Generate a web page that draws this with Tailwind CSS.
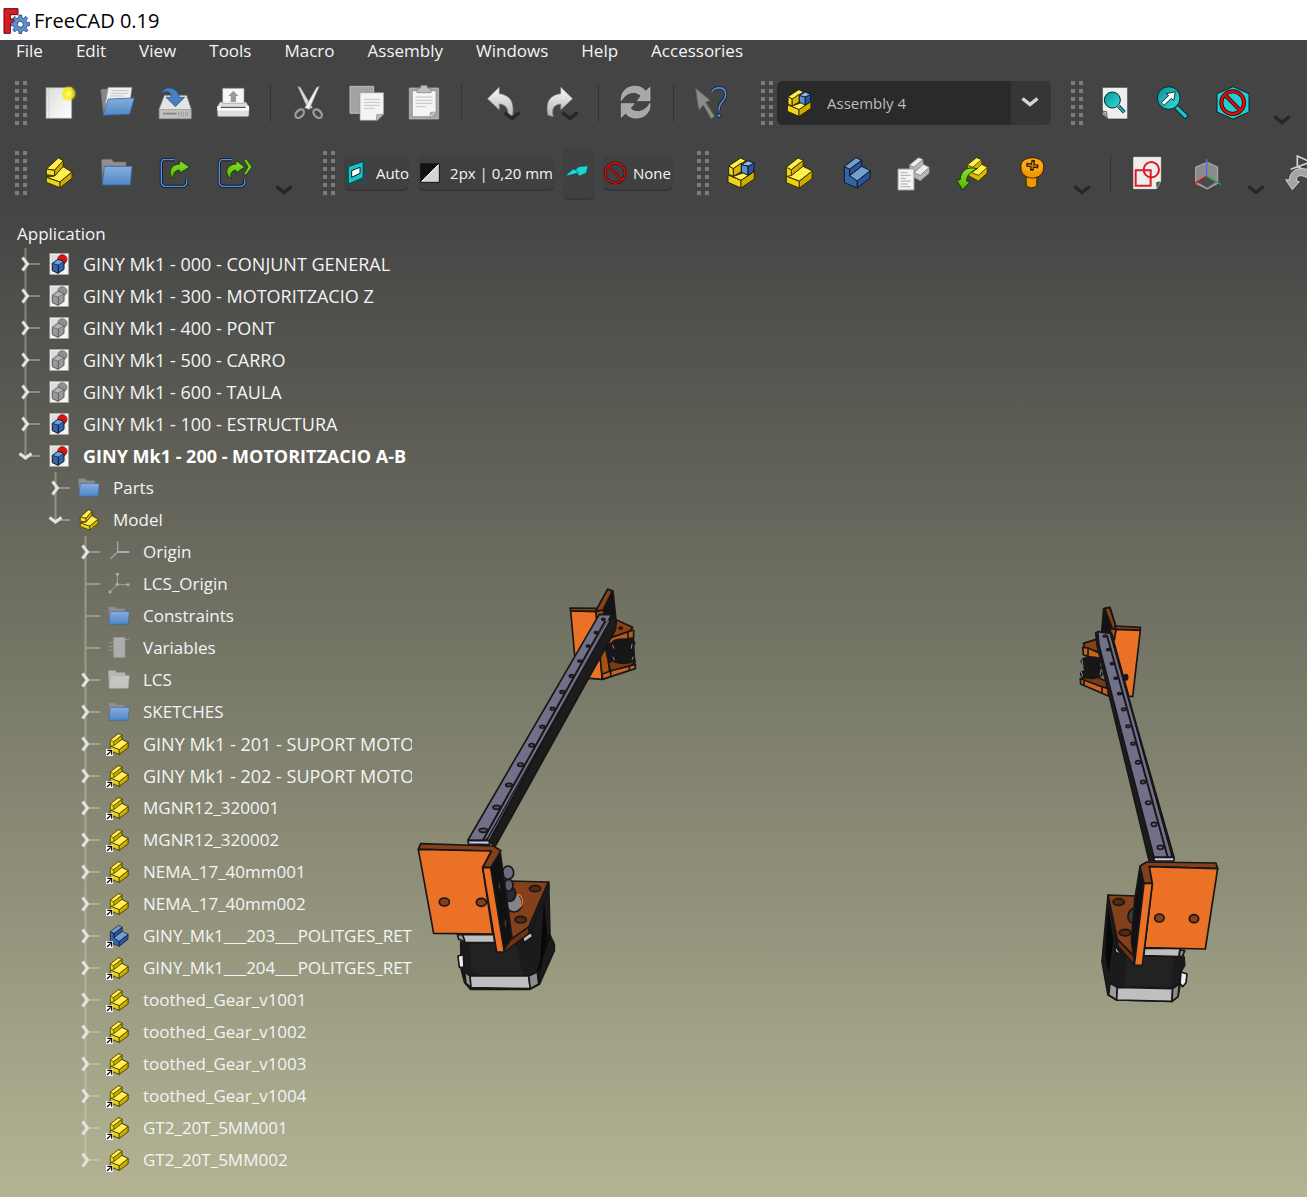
<!DOCTYPE html>
<html lang="en">
<head>
<meta charset="utf-8">
<meta name="viewport" content="width=device-width, initial-scale=1">
<title>FreeCAD 0.19</title>
<script src="https://cdn.jsdelivr.net/npm/@tailwindcss/browser@4"></script>
</head>
<body class="flex min-h-screen flex-col overflow-x-hidden bg-[#444444] font-['Open_Sans','Noto_Sans',sans-serif] text-[17px] text-gray-100">

<!-- Shared icon definitions -->
<svg class="absolute size-0" aria-hidden="true">
  <defs>
    <linearGradient id="gYel" x1="0" y1="0" x2="1" y2="1"><stop offset="0" stop-color="#fce94f"/><stop offset="1" stop-color="#d9b800"/></linearGradient>
    <linearGradient id="gBlue" x1="0" y1="0" x2="0" y2="1"><stop offset="0" stop-color="#86aedc"/><stop offset="1" stop-color="#5088c8"/></linearGradient>
    <linearGradient id="gPaper" x1="0" y1="0" x2="1" y2="1"><stop offset="0" stop-color="#dcdcda"/><stop offset="1" stop-color="#ffffff"/></linearGradient>
    <linearGradient id="gGrey" x1="0" y1="0" x2="0" y2="1"><stop offset="0" stop-color="#fafafa"/><stop offset="1" stop-color="#b4b4b4"/></linearGradient>
    <linearGradient id="gGreen" x1="0" y1="0" x2="0" y2="1"><stop offset="0" stop-color="#8ae234"/><stop offset="1" stop-color="#4fb000"/></linearGradient>
    <linearGradient id="gTeal" x1="0" y1="0" x2="1" y2="1"><stop offset="0" stop-color="#0a8f94"/><stop offset="1" stop-color="#34e0e2"/></linearGradient>
    <radialGradient id="gGlow"><stop offset="0" stop-color="#fffde0"/><stop offset=".25" stop-color="#fdf54c"/><stop offset=".65" stop-color="#f5e900" stop-opacity=".85"/><stop offset="1" stop-color="#f5e900" stop-opacity="0"/></radialGradient>
  </defs>

  <symbol id="part" viewBox="129 471 96 96">
    <g stroke="#3a3200" stroke-width="3" stroke-linejoin="round">
      <path d="M139 507 175 474 190 482 189 499 164 528 139 521Z" fill="#d9b800"/>
      <path d="M139 507 175 474 190 482 164 511Z" fill="#fff04f"/>
      <path d="M139 507 164 511 164 528 139 524Z" fill="#f5dc2a"/>
      <path d="M164 511 190 482 189 500 164 528Z" fill="#d2b100"/>
      <path d="M139 532 164 528 189 500 216 516 180 546Z" fill="#fff04f"/>
      <path d="M139 532 180 546 180 563 139 547Z" fill="#f0d41c"/>
      <path d="M180 546 216 516 216 535 180 563Z" fill="#cfae00"/>
    </g>
  </symbol>
  <symbol id="part2" viewBox="1029 351 96 96">
    <g stroke="#3a3200" stroke-width="3" stroke-linejoin="round">
      <path d="M1039 382 1074 354 1090 361 1089 378 1117 392 1116 416 1078 444 1039 428Z" fill="#f0d41c"/>
      <path d="M1039 382 1074 354 1090 361 1054 389Z" fill="#fff04f"/>
      <path d="M1054 389 1090 361 1089 379 1054 408Z" fill="#cfae00"/>
      <path d="M1039 409 1054 407 1089 379 1117 393 1078 423Z" fill="#fff04f"/>
      <path d="M1039 409 1078 424 1078 444 1039 428Z" fill="#ecd018"/>
      <path d="M1078 424 1117 393 1116 416 1078 444Z" fill="#cfae00"/>
    </g>
  </symbol>
  <symbol id="body" viewBox="1203 351 96 96">
    <g stroke="#0b1a30" stroke-width="3" stroke-linejoin="round">
      <path d="M1213 380 1248 353 1265 361 1229 388Z" fill="#729fcf"/>
      <path d="M1213 380 1229 388 1229 406 1252 422 1252 444 1213 428Z" fill="#3465a4"/>
      <path d="M1229 388 1265 361 1265 378 1229 407Z" fill="#2a5597"/>
      <path d="M1229 407 1265 379 1291 392 1252 423Z" fill="#729fcf"/>
      <path d="M1252 423 1291 392 1290 414 1252 444Z" fill="#2a5597"/>
    </g>
  </symbol>
  <symbol id="asm" viewBox="849 345 108 108">
    <g stroke="#2e2800" stroke-width="3" stroke-linejoin="round">
      <path d="M864 405 903 421 903 444 864 427Z" fill="#f0d41c"/>
      <path d="M903 421 943 394 943 417 903 444Z" fill="#cfae00"/>
      <path d="M878 410 916 396 943 394 903 421Z" fill="#fff04f"/>
      <path d="M866 378 902 354 918 362 880 386Z" fill="#fff04f"/>
      <path d="M866 378 880 386 880 409 866 403Z" fill="#f5dc2a"/>
      <path d="M880 386 904 369 904 395 880 409Z" fill="#d9b800"/>
      <path d="M904 374 924 362 943 370 924 379Z" fill="#8fb5e0" stroke="#0b1a30"/>
      <path d="M904 374 924 379 924 406 904 396Z" fill="#5b8fce" stroke="#0b1a30"/>
      <path d="M924 379 943 370 941 394 924 406Z" fill="#2a5597" stroke="#0b1a30"/>
    </g>
  </symbol>
  <symbol id="folder" viewBox="303 471 96 96">
    <path d="M304 482 307 478H335L341 486H378V500L384 552 312 555 308 550Z" fill="#8f8f8d" stroke="#6a6a68" stroke-width="2"/>
    <path d="M313 499H396L391 555H307Z" fill="url(#gBlue)" stroke="#3465a4" stroke-width="2.500"/>
  </symbol>
  <symbol id="folderGrey" viewBox="303 471 96 96">
    <path d="M304 482 307 478H335L341 486H378V500L384 552 312 555 308 550Z" fill="#b8b8b6" stroke="#9a9a98" stroke-width="2"/>
    <path d="M313 499H396L391 555H307Z" fill="#c4c4c2" stroke="#a5a5a3" stroke-width="2.500"/>
  </symbol>
  <symbol id="doc" viewBox="144 112 66 66">
    <path d="M149 113H206V177H149Z" fill="#f4f4f2" stroke="#8a8a88" stroke-width="1.500"/>
    <path d="M153 117H190L153 160Z" fill="#dcdcda"/>
    <circle cx="187" cy="131" r="14" fill="#e01010" stroke="#7a0000" stroke-width="2"/>
    <path d="M157 143 174 131 192 138 192 161 174 173 157 165Z" fill="#3465a4" stroke="#0b1a30" stroke-width="3" stroke-linejoin="round"/>
    <path d="M157 143 174 131 192 138 175 148Z" fill="#729fcf" stroke="#0b1a30" stroke-width="2"/>
    <path d="M175 148V173" stroke="#0b1a30" stroke-width="3"/>
  </symbol>
  <symbol id="docGrey" viewBox="144 112 66 66">
    <path d="M149 113H206V177H149Z" fill="#f4f4f2" stroke="#8a8a88" stroke-width="1.500"/>
    <path d="M153 117H190L153 160Z" fill="#dcdcda"/>
    <circle cx="187" cy="131" r="14" fill="#8e8e8e" stroke="#666" stroke-width="2"/>
    <path d="M157 143 174 131 192 138 192 161 174 173 157 165Z" fill="#999" stroke="#5a5a5a" stroke-width="3" stroke-linejoin="round"/>
    <path d="M157 143 174 131 192 138 175 148Z" fill="#b4b4b4" stroke="#5a5a5a" stroke-width="2"/>
    <path d="M175 148V173" stroke="#5a5a5a" stroke-width="3"/>
  </symbol>
  <symbol id="origin" viewBox="0 0 66 66">
    <path d="M29 0V32L7 54M29 33H64" fill="none" stroke="#a3a3a8" stroke-width="4"/>
    <path d="M29 33H64" stroke="#c4c4c8" stroke-width="3"/>
  </symbol>
  <symbol id="lcs" viewBox="0 0 66 66">
    <path d="M28 2V34L6 57M28 35H60" fill="none" stroke="#a3a3a8" stroke-width="3"/>
    <g fill="#a9a9b0"><circle cx="28" cy="3" r="5"/><circle cx="28" cy="34" r="5"/><circle cx="6" cy="57" r="5"/><circle cx="60" cy="35" r="5"/></g>
  </symbol>
  <symbol id="vars" viewBox="0 0 66 66">
    <path d="M17 1H51V61H17Z" fill="#adadad" stroke="#98989c" stroke-width="2"/>
    <path d="M51 8H64M2 17H16M2 28H16M2 39H16" stroke="#9a9aa0" stroke-width="3"/>
  </symbol>
  <symbol id="grip" viewBox="0 0 12 44">
    <g fill="#7c7c7c">
      <path d="M0 0H4V4H0ZM8 0H12V4H8ZM0 8H4V12H0ZM8 8H12V12H8ZM0 16H4V20H0ZM8 16H12V20H8ZM0 24H4V28H0ZM8 24H12V28H8ZM0 32H4V36H0ZM8 32H12V36H8ZM0 40H4V44H0ZM8 40H12V44H8Z"/>
    </g>
  </symbol>
  <symbol id="chev" viewBox="0 0 18 10"><path d="M1.500 1.500 9 7.500 16.500 1.500" fill="none" stroke="currentColor" stroke-width="3.500"/></symbol>
</svg>

<!-- Title bar -->
<header class="flex h-10 shrink-0 items-center gap-1 bg-white pl-[2px] pt-0.5 text-black">
  <svg class="h-7 w-7 shrink-0" viewBox="4 18 84 84" aria-hidden="true">
    <path d="M10 23H52V41H29V54H42V68H29V97H10Z" fill="#dc1c24" stroke="#5c0508" stroke-width="3"/>
    <g transform="translate(59 70)">
      <g fill="#5a8fd0" stroke="#17305a" stroke-width="2">
        <path d="M-5-20-4-28H4L5-20 10-18 16-24 22-18 17-12 19-6 28-5V4L20 5 17 11 23 18 17 23 11 18 5 20 4 28H-4L-5 20-11 17-17 23-23 17-18 11-20 5-28 4V-5L-20-6-17-12-23-18-17-24-11-18Z"/>
      </g>
      <circle r="9" fill="#fff" stroke="#17305a" stroke-width="2.500"/>
    </g>
  </svg>
  <h1 class="text-[20px] leading-8">FreeCAD 0.19</h1>
</header>

<!-- Menu bar -->
<nav class="flex h-[22px] shrink-0 items-center gap-[33px] pl-4 leading-[22px]" aria-label="Main menu">
  <a href="#file">File</a>
  <a href="#edit">Edit</a>
  <a href="#view">View</a>
  <a href="#tools">Tools</a>
  <a href="#macro">Macro</a>
  <a href="#assembly">Assembly</a>
  <a href="#windows">Windows</a>
  <a href="#help">Help</a>
  <a href="#accessories">Accessories</a>
</nav>

<!-- File, workbench and view toolbars -->
<div class="flex h-[82px] shrink-0 items-center overflow-hidden pl-[15px]" role="toolbar" aria-label="File">
  <svg class="mr-[3px] h-11 w-3 shrink-0" aria-hidden="true"><use href="#grip"/></svg>
  <button class="grid w-[58px] shrink-0 place-items-center" aria-label="New">
    <svg class="size-9" viewBox="123 255 108 108"><path d="M138 263H215V355H138Z" fill="url(#gPaper)" stroke="#9a9a98" stroke-width="2"/><path d="M147 264V354" stroke="#c8c8c6" stroke-width="2"/><circle cx="206" cy="281" r="24" fill="url(#gGlow)"/></svg>
  </button>
  <button class="grid w-[58px] shrink-0 place-items-center" aria-label="Open">
    <svg class="size-9" viewBox="297 255 108 108"><path d="M302 270 306 267H325V330L310 340Z" fill="#888" stroke="#666" stroke-width="2"/><path d="M324 262H396L391 300 312 340Z" fill="#f0f0ee" stroke="#888" stroke-width="2"/><path d="M335 272H386M333 280H384M330 288H370" stroke="#aaa" stroke-width="2"/><path d="M325 297 403 294 389 343 309 346Z" fill="url(#gBlue)" stroke="#3465a4" stroke-width="2.500"/></svg>
  </button>
  <button class="grid w-[58px] shrink-0 place-items-center" aria-label="Save">
    <svg class="size-9" viewBox="471 255 108 108"><path d="M493 286H560L574 328V356H477V328Z" fill="#e4e4e2" stroke="#777" stroke-width="2"/><path d="M478 329H573V356H478Z" fill="#c2c2c0" stroke="#888" stroke-width="2"/><path d="M489 341H530" stroke="#8a8a88" stroke-width="6"/><path d="M536 335V350M543 335V350M550 335V350M557 335V350M563 335V350" stroke="#999" stroke-width="3"/><path d="M484 281C492 256 532 258 538 292H554L526 320 498 292H513C514 274 498 270 484 281Z" fill="#4a7fc0" stroke="#204a87" stroke-width="2"/></svg>
  </button>
  <button class="grid w-[58px] shrink-0 place-items-center" aria-label="Print">
    <svg class="size-9" viewBox="645 255 108 108"><path d="M660 306H738L747 320V345Q747 350 741 350H658Q652 350 652 345V320Z" fill="#dededc" stroke="#777" stroke-width="2"/><path d="M668 265H732V310H668Z" fill="#f6f6f4" stroke="#999" stroke-width="2"/><path d="M700 272 715 288H708V306H692V288H685Z" fill="#9a9a98"/><path d="M652 318H747V332H652Z" fill="#fafafa"/><path d="M662 322H737" stroke="#555" stroke-width="4"/></svg>
  </button>
  <span class="mx-2 h-[38px] w-px shrink-0 bg-[#343434]"></span>
  <button class="grid w-[58px] shrink-0 place-items-center" aria-label="Cut">
    <svg class="size-9" viewBox="870 255 108 108"><path d="M893 259 901 262 938 324 924 328Z" fill="#dcdcda" stroke="#777" stroke-width="1.500"/><path d="M958 259 950 262 914 324 928 328Z" fill="#f0f0ee" stroke="#777" stroke-width="1.500"/><g fill="none" stroke="#9c9c9a" stroke-width="7"><ellipse cx="899" cy="341" rx="10" ry="15" transform="rotate(45 899 341)"/><ellipse cx="953" cy="341" rx="10" ry="15" transform="rotate(-45 953 341)"/></g></svg>
  </button>
  <button class="grid w-[58px] shrink-0 place-items-center" aria-label="Copy">
    <svg class="size-9" viewBox="1044 255 108 108"><path d="M1050 259H1121V340H1050Z" fill="#a2a2a0" stroke="#cacac8" stroke-width="2.500"/><path d="M1080 278H1151V343L1132 361H1080Z" fill="#f4f4f2" stroke="#999" stroke-width="2"/><path d="M1092 298H1140M1092 307H1140M1092 316H1140M1092 325H1124" stroke="#c4c4c2" stroke-width="3"/><path d="M1151 342 1130 344 1129 361Z" fill="#bbb" stroke="#888" stroke-width="2"/></svg>
  </button>
  <button class="grid w-[58px] shrink-0 place-items-center" aria-label="Paste">
    <svg class="size-9" viewBox="1221 255 108 108"><path d="M1231 264H1319V357H1231Z" fill="#a4a4a2" stroke="#c4c4c2" stroke-width="2"/><path d="M1240 272H1311V336L1298 350H1240Z" fill="#f4f4f2" stroke="#888" stroke-width="2"/><path d="M1250 291H1300M1250 301H1300M1250 310H1300M1250 320H1280" stroke="#c4c4c2" stroke-width="3"/><path d="M1254 278V265H1263L1267 256H1283L1287 265H1296V278Z" fill="#bcbcba" stroke="#777" stroke-width="2"/><path d="M1311 334 1293 337 1291 350Z" fill="#aaa"/></svg>
  </button>
  <span class="mx-2 h-[38px] w-px shrink-0 bg-[#343434]"></span>
  <button class="relative grid w-[60px] shrink-0 place-items-center" aria-label="Undo">
    <svg class="size-9" viewBox="126 135 108 108"><path d="M142 176 178 141V161C208 164 224 184 218 226L204 230C206 206 198 194 178 192V210Z" fill="url(#gGrey)" stroke="#777" stroke-width="2"/></svg>
    <svg class="absolute left-[33px] top-[26px] h-2.5 w-[18px] text-[#262626]"><use href="#chev"/></svg>
  </button>
  <button class="relative grid w-[60px] shrink-0 place-items-center" aria-label="Redo">
    <svg class="size-9" viewBox="306 135 108 108"><path d="M398 176 362 141V161C332 164 314 184 324 226L340 230C334 206 342 194 362 192V210Z" fill="url(#gGrey)" stroke="#777" stroke-width="2"/></svg>
    <svg class="absolute left-[31px] top-[26px] h-2.5 w-[18px] text-[#262626]"><use href="#chev"/></svg>
  </button>
  <span class="mx-2 h-[38px] w-px shrink-0 bg-[#343434]"></span>
  <button class="grid w-[58px] shrink-0 place-items-center" aria-label="Refresh">
    <svg class="size-9" viewBox="534 135 108 108"><g fill="#a8a8a6" stroke="#c4c4c2" stroke-width="2"><path d="M544 182C540 134 600 128 617 154L630 142V182H592L603 168C590 152 562 152 544 182Z"/><path d="M630 190C634 238 574 246 557 219L544 232V191H582L571 205C584 220 612 220 630 190Z"/></g></svg>
  </button>
  <span class="mx-2 h-[38px] w-px shrink-0 bg-[#343434]"></span>
  <button class="mr-[21px] grid w-[58px] shrink-0 place-items-center" aria-label="What's this?">
    <svg class="size-9" viewBox="759 135 108 108"><path d="M766 144 811 181 798 187 824 229 813 237 790 196 776 212Z" fill="#8a8c86" stroke="#555753" stroke-width="3"/><path d="M815 157C820 140 858 136 857 164 856 186 837 182 837 211" fill="none" stroke="#10233f" stroke-width="10"/><path d="M815 157C820 140 858 136 857 164 856 186 837 182 837 211" fill="none" stroke="#5a8acb" stroke-width="5"/><circle cx="837" cy="227" r="6" fill="#5a8acb" stroke="#10233f" stroke-width="3"/></svg>
  </button>
  <svg class="mr-1 h-11 w-3 shrink-0" aria-hidden="true"><use href="#grip"/></svg>
  <div class="relative mr-5 h-11 w-[274px] shrink-0 overflow-hidden rounded-md bg-[#363636]">
    <select class="h-11 w-[234px] appearance-none bg-[#2a2a2a] pl-[50px] text-[15px] text-[#bdbdbd]" aria-label="Workbench"><option>Assembly 4</option></select>
    <svg class="absolute left-1.5 top-1.5 size-8" aria-hidden="true"><use href="#asm"/></svg>
    <svg class="absolute right-3 top-4 h-2.5 w-[18px] text-[#d6d6d6]" aria-hidden="true"><use href="#chev"/></svg>
  </div>
  <svg class="mr-[3px] h-11 w-3 shrink-0" aria-hidden="true"><use href="#grip"/></svg>
  <button class="grid w-[58px] shrink-0 place-items-center" aria-label="Fit all">
    <svg class="size-9" viewBox="681 135 108 108"><path d="M697 142H773V237H712L697 222Z" fill="#eeeeec" stroke="#2e3436" stroke-width="2"/><path d="M697 213 710 215 712 237Z" fill="#bbb" stroke="#2e3436" stroke-width="2"/><path d="M746 199 763 217" stroke="#042a2a" stroke-width="11"/><path d="M746 199 762 216" stroke="#16b8bc" stroke-width="6"/><circle cx="727" cy="180" r="24" fill="url(#gTeal)" stroke="#042a2a" stroke-width="3"/></svg>
  </button>
  <button class="grid w-[58px] shrink-0 place-items-center" aria-label="Fit selection">
    <svg class="size-9" viewBox="855 135 108 108"><path d="M920 202 951 233" stroke="#042a2a" stroke-width="16"/><path d="M920 202 949 231" stroke="#1cc4c8" stroke-width="10"/><circle cx="896" cy="174" r="34" fill="url(#gTeal)" stroke="#042a2a" stroke-width="3"/><path d="M916 155 911 182 904 175 882 196 874 188 896 167 889 161Z" fill="#fff" stroke="#111" stroke-width="2.500"/></svg>
  </button>
  <button class="grid w-[60px] shrink-0 place-items-center" aria-label="Draw style">
    <svg class="size-9" viewBox="1032 135 108 108"><path d="M1089 140 1137 161V216L1089 237 1041 216V161Z" fill="#22cdd1" stroke="#042a2a" stroke-width="3"/><g fill="none"><circle cx="1088" cy="188" r="34" stroke="#3a0000" stroke-width="12"/><path d="M1065 165 1111 211" stroke="#3a0000" stroke-width="12"/><circle cx="1088" cy="188" r="34" stroke="#d81010" stroke-width="7"/><path d="M1065 165 1111 211" stroke="#d81010" stroke-width="7"/></g></svg>
  </button>
  <button class="grid w-10 shrink-0 place-items-center pt-[34px]" aria-label="Draw style options"><svg class="h-2.5 w-[18px] text-[#262626]"><use href="#chev"/></svg></button>
</div>

<!-- Structure, draft and assembly toolbars -->
<div class="flex h-[58px] shrink-0 items-center overflow-hidden pl-[15px]" role="toolbar" aria-label="Structure">
  <svg class="mr-[3px] h-11 w-3 shrink-0" aria-hidden="true"><use href="#grip"/></svg>
  <button class="grid w-[58px] shrink-0 place-items-center" aria-label="Create part"><svg class="size-8"><use href="#part"/></svg></button>
  <button class="grid w-[58px] shrink-0 place-items-center" aria-label="Create group"><svg class="size-8"><use href="#folder"/></svg></button>
  <button class="grid w-[58px] shrink-0 place-items-center" aria-label="Make link">
    <svg class="size-9" viewBox="471 465 108 108"><path d="M524 479H490L484 486V551L492 559H552L560 551V536" fill="none" stroke="#0b1a30" stroke-width="9"/><path d="M524 479H490L484 486V551L492 559H552L560 551V536" fill="none" stroke="#5a8fd6" stroke-width="4"/><path d="M539 481 569 501 539 520V511C524 511 520 520 521 536 504 524 506 494 539 492Z" fill="url(#gGreen)" stroke="#173800" stroke-width="3"/></svg>
  </button>
  <button class="grid w-[60px] shrink-0 place-items-center" aria-label="Make sub-link">
    <svg class="size-9" viewBox="648 465 108 108"><path d="M696 479H664L658 486V551L666 559H726L734 551V536" fill="none" stroke="#0b1a30" stroke-width="9"/><path d="M696 479H664L658 486V551L666 559H726L734 551V536" fill="none" stroke="#5a8fd6" stroke-width="4"/><path d="M708 481 734 501 708 520V511C696 511 691 520 694 536 672 524 676 494 708 492Z" fill="url(#gGreen)" stroke="#173800" stroke-width="3"/><path d="M731 479 739 477 756 501 738 525 731 522 744 501Z" fill="#73d216" stroke="#173800" stroke-width="2.500"/></svg>
  </button>
  <button class="mr-[19px] grid w-10 shrink-0 place-items-center pt-[34px]" aria-label="Link actions"><svg class="h-2.5 w-[18px] text-[#262626]"><use href="#chev"/></svg></button>
  <svg class="mr-[9px] h-11 w-3 shrink-0" aria-hidden="true"><use href="#grip"/></svg>
  <button class="mr-[9px] flex h-9 w-[65px] shrink-0 items-center justify-between rounded-md border-b-2 border-[#363636] bg-[#404040] pt-0.5 text-[15px]">
    <svg class="size-6" viewBox="1029 483 72 72"><path d="M1031 508 1100 486M1031 545 1100 524M1040 480V552M1066 480V550M1088 480V552M1066 549H1098" stroke="#0a5c60" stroke-width="3" fill="none"/><path d="M1042 500 1086 485V533L1042 552Z" fill="#17c4c8" stroke="#042a2a" stroke-width="2"/><path d="M1052 512 1077 502V520L1052 532Z" fill="#fff" stroke="#111" stroke-width="3"/></svg>
    Auto
  </button>
  <button class="mr-2 flex h-9 w-[137px] shrink-0 items-center justify-between whitespace-nowrap rounded-md border-b-2 border-[#363636] bg-[#404040] pr-0.5 pt-0.5 text-[15px]">
    <svg class="size-6" viewBox="1252 484 72 72"><path d="M1260 492H1316V548H1260Z" fill="#d4d4d4"/><path d="M1260 492H1316L1260 548Z" fill="#111"/><path d="M1262 546 1314 494" stroke="#fff" stroke-width="3"/><path d="M1260 492H1316V548H1260Z" fill="none" stroke="#111" stroke-width="3"/></svg>
    2px | 0,20 mm
  </button>
  <button class="mr-2 grid h-[53px] w-8 shrink-0 place-items-center rounded-md border-b-2 border-[#363636] bg-[#404040]" aria-label="Construction mode">
    <svg class="h-6 w-7" viewBox="369 363 84 72"><path d="M373 408 393 390 400 393 410 383 438 380 433 402 412 411 405 403 374 411Z" fill="#22d3d6" stroke="#0a4d50" stroke-width="2"/><path d="M400 393 410 400 405 403" fill="none" stroke="#0a6a6e" stroke-width="2"/></svg>
  </button>
  <button class="mr-6 flex h-9 w-[70px] shrink-0 items-center justify-between rounded-md border-b-2 border-[#363636] bg-[#404040] pr-0.5 pt-0.5 text-[15px]">
    <svg class="size-6" viewBox="489 363 72 72"><g fill="none"><circle cx="525" cy="399" r="30" stroke="#300" stroke-width="7"/><path d="M504 378 546 420" stroke="#300" stroke-width="7"/><circle cx="525" cy="399" r="30" stroke="#e01010" stroke-width="4"/><path d="M504 378 546 420" stroke="#e01010" stroke-width="4"/></g></svg>
    None
  </button>
  <svg class="mr-[3px] h-11 w-3 shrink-0" aria-hidden="true"><use href="#grip"/></svg>
  <button class="grid w-[58px] shrink-0 place-items-center" aria-label="New assembly"><svg class="size-9"><use href="#asm"/></svg></button>
  <button class="grid w-[58px] shrink-0 place-items-center" aria-label="New part"><svg class="size-8"><use href="#part2"/></svg></button>
  <button class="grid w-[58px] shrink-0 place-items-center" aria-label="New body"><svg class="size-8"><use href="#body"/></svg></button>
  <button class="grid w-[58px] shrink-0 place-items-center" aria-label="Insert part">
    <svg class="size-9" viewBox="81 345 108 108"><g stroke="#666" stroke-width="2" stroke-linejoin="round"><path d="M118 375 145 353 159 358 160 372 178 382 178 400 151 423 118 405Z" fill="#b8b8b6"/><path d="M118 375 145 353 159 358 132 382Z" fill="#eee"/><path d="M132 398 160 373 178 382 151 406Z" fill="#eee"/></g><path d="M84 387H132V450H84Z" fill="#f4f4f2" stroke="#999" stroke-width="3"/><path d="M92 398H112M92 406H122M92 415H108M92 423H122M92 432H114M92 440H122" stroke="#aaa" stroke-width="3"/></svg>
  </button>
  <button class="grid w-[58px] shrink-0 place-items-center" aria-label="Insert link">
    <svg class="size-9" viewBox="255 345 108 108"><g stroke="#3a3200" stroke-width="2.500" stroke-linejoin="round"><path d="M292 375 319 353 335 359 335 373 352 382 351 400 325 423 292 405Z" fill="#d9b800"/><path d="M292 375 319 353 335 359 308 382Z" fill="#fff04f"/><path d="M306 398 335 373 352 382 325 406Z" fill="#fff04f"/></g><path d="M322 386C290 378 272 392 270 420L259 419 278 450 300 425 290 423C290 404 302 396 322 386Z" fill="url(#gGreen)" stroke="#173800" stroke-width="3"/></svg>
  </button>
  <button class="grid w-[58px] shrink-0 place-items-center" aria-label="Insert fastener">
    <svg class="size-9" viewBox="429 345 108 108"><path d="M468 408H501L500 438Q485 449 469 438Z" fill="#f09a00" stroke="#3a2400" stroke-width="3"/><path d="M453 377C453 345 521 345 521 377V390C512 422 462 422 453 390Z" fill="#f09a00" stroke="#3a2400" stroke-width="3"/><ellipse cx="487" cy="377" rx="32" ry="21" fill="#fca51c"/><path d="M469 374 505 380M490 360 485 392" stroke="#2a1a00" stroke-width="11"/><path d="M473 375 501 379M489 365 486 387" stroke="#d98600" stroke-width="4"/></svg>
  </button>
  <button class="grid w-11 shrink-0 place-items-center pt-[34px]" aria-label="Fastener types"><svg class="h-2.5 w-[18px] text-[#262626]"><use href="#chev"/></svg></button>
  <span class="ml-1.5 mr-[7px] h-[38px] w-px shrink-0 bg-[#343434]"></span>
  <button class="grid w-[58px] shrink-0 place-items-center" aria-label="New sketch">
    <svg class="size-9" viewBox="777 345 108 108"><path d="M791 352H872V424L860 446H791Z" fill="#eeeeec" stroke="#fff" stroke-width="2"/><path d="M872 424 858 427 860 446Z" fill="#555"/><g fill="none" stroke="#e01b24" stroke-width="6"><path d="M797 391H842V437H797Z"/><circle cx="844" cy="389" r="23"/></g></svg>
  </button>
  <button class="grid w-[60px] shrink-0 place-items-center" aria-label="New coordinate system">
    <svg class="size-9" viewBox="954 345 108 108"><path d="M1012 367 1043 381V430L1012 447 977 430V381Z" fill="#8a8a8a" stroke="#b4b4b4" stroke-width="3"/><path d="M1012 409 1038 425 1012 443 984 427Z" fill="#4a4a4a"/><path d="M1010 409V357" stroke="#4a6cf0" stroke-width="4"/><path d="M1010 409 966 435" stroke="#c01010" stroke-width="4"/><path d="M1010 409 1053 434" stroke="#10b040" stroke-width="4"/></svg>
  </button>
  <button class="grid w-10 shrink-0 place-items-center pt-[34px]" aria-label="Datum types"><svg class="h-2.5 w-[18px] text-[#262626]"><use href="#chev"/></svg></button>
  <button class="grid w-[50px] shrink-0 place-items-center" aria-label="Import datum">
    <svg class="size-9" viewBox="1239 345 108 108"><path d="M1282 378V348L1322 366 1262 388M1280 378 1312 396 1330 380" fill="none" stroke="#d4d4d2" stroke-width="5"/><path d="M1312 388C1280 380 1260 394 1258 420L1247 419 1267 449 1288 425 1279 423C1280 404 1292 400 1322 420Z" fill="#a4a4a2" stroke="#d0d0ce" stroke-width="3"/></svg>
  </button>
</div>

<!-- Model tree over the 3D view -->
<main class="flex flex-1 bg-linear-to-b from-[#444444] via-[#7b7b6a] to-[#b4b494]">
  <section class="w-[412px] shrink-0 overflow-hidden pt-4" aria-label="Model tree">
    <h2 class="h-[30px] pl-[17px] leading-8">Application</h2>
    <ul id="tree" class="pl-4"></ul>
  </section>

  <svg class="min-w-0 flex-1" viewBox="412 202 895 995" role="img" aria-label="3D view of the motor assembly" stroke-linejoin="round">
    <!-- left upper bracket -->
    <g transform="translate(540 570) scale(.33333)" stroke="#171717" stroke-width="5">
      <path d="M168 122 203 58 219 63 228 150 185 150Z" fill="#141414"/>
      <path d="M168 122 203 58 217 63 188 122Z" fill="#8b4215"/>
      <path d="M90 114 168 115V125L92 123Z" fill="#8b4215"/>
      <path d="M92 123 168 125 187 328 110 322Z" fill="#ea7125"/>
      <path d="M168 125 190 120 200 210 210 320 187 328Z" fill="#a8500f"/>
      <path d="M194 225 280 205 284 285 212 305Z" fill="#171717"/>
      <path d="M230 150 278 172 270 184 205 205 200 190Z" fill="#8b4215"/>
      <path d="M204 206 272 183 281 180V203L203 222Z" fill="#b85a1a"/>
      <path d="M264 185V206" fill="none"/>
      <path d="M205 278 225 268 286 274 272 288 212 304Z" fill="#7a3a12"/>
      <path d="M187 328V312L212 303 286 283V296Z" fill="#c86420"/>
      <path d="M212 303V320M268 288V301" fill="none"/>
      <ellipse cx="250" cy="220" rx="34" ry="13" fill="#171717"/>
      <ellipse cx="250" cy="242" rx="28" ry="14" fill="#171717"/>
      <ellipse cx="250" cy="266" rx="34" ry="14" fill="#171717"/>
      <path d="M217 224 222 236M276 222 274 236M219 260 223 271M280 260 276 270" stroke="#88888e" stroke-width="3"/>
      <ellipse cx="242" cy="174" rx="5" ry="3" fill="#171717"/>
    </g>
    <!-- right upper bracket -->
    <g transform="translate(1060 590) scale(.33333)" stroke="#171717" stroke-width="5">
      <path d="M131 56 150 52 167 108 165 140 125 124Z" fill="#141414"/>
      <path d="M134 56 149 53 167 108 160 122Z" fill="#8b4215"/>
      <path d="M165 108 241 112V121L168 118Z" fill="#8b4215"/>
      <path d="M168 118 241 121 218 320 206 318 160 150Z" fill="#ea7125"/>
      <path d="M148 116 168 118 163 150Z" fill="#a8500f"/>
      <path d="M70 160 108 148 122 188 74 174Z" fill="#8b4215"/>
      <path d="M68 172 84 174 124 192 126 214 70 194Z" fill="#c86420"/>
      <path d="M84 176V198" fill="none"/>
      <path d="M62 266 105 258 142 275 145 300 62 270Z" fill="#7a3a12"/>
      <path d="M61 266 125 290 145 296V318L62 282Z" fill="#c86420"/>
      <path d="M72 272V286M126 292V309" fill="none"/>
      <ellipse cx="94" cy="214" rx="30" ry="13" fill="#171717"/>
      <ellipse cx="98" cy="232" rx="26" ry="14" fill="#171717"/>
      <ellipse cx="94" cy="252" rx="32" ry="13" fill="#171717"/>
      <path d="M66 208 68 222M64 246 68 258M122 220 124 230M122 244 120 256" stroke="#88888e" stroke-width="3"/>
      <ellipse cx="198" cy="262" rx="5" ry="8" fill="#171717"/>
    </g>
    <!-- left rail -->
    <g transform="translate(460 600) scale(.33333)" stroke="#171717" stroke-width="5">
      <path d="M455 44 469 66 466 90 106 738 88 726Z" fill="#1c1c1c"/>
      <path d="M418 43 455 44 88 722 24 720Z" fill="#727088"/>
      <path d="M436 62 68 722M456 50 78 722" fill="none" stroke-width="6"/>
      <path d="M446 62 80 712" fill="none" stroke="#72708a" stroke-width="4"/>
      <path d="M24 722 88 722V734L26 732Z" fill="#c9c7f0"/>
      <g fill="#55546a" stroke-width="5">
        <ellipse cx="430" cy="58" rx="5" ry="3"/><ellipse cx="408" cy="98" rx="5" ry="3"/><ellipse cx="384" cy="138" rx="5" ry="3"/><ellipse cx="360" cy="183" rx="6" ry="3"/><ellipse cx="334" cy="228" rx="6" ry="4"/><ellipse cx="307" cy="276" rx="7" ry="4"/><ellipse cx="278" cy="326" rx="7" ry="4"/><ellipse cx="247" cy="380" rx="7" ry="4"/><ellipse cx="215" cy="436" rx="8" ry="5"/><ellipse cx="182" cy="494" rx="9" ry="5"/><ellipse cx="147" cy="555" rx="10" ry="5"/><ellipse cx="110" cy="622" rx="11" ry="6"/><ellipse cx="70" cy="691" rx="12" ry="6"/>
      </g>
    </g>
    <!-- right rail -->
    <g transform="translate(1085 620) scale(.33333)" stroke="#171717" stroke-width="5">
      <path d="M32 38 40 35 62 70 207 722H192L36 75Z" fill="#1c1c1c"/>
      <path d="M38 35 76 40 267 712H207L42 75Z" fill="#727088"/>
      <path d="M66 46 248 712M78 46 262 712" fill="none" stroke-width="6"/>
      <path d="M74 52 255 704" fill="none" stroke="#72708a" stroke-width="4"/>
      <path d="M207 712H267V723H207Z" fill="#c9c7f0"/>
      <g fill="#6f6d86" stroke-width="5">
        <ellipse cx="60" cy="48" rx="5" ry="3"/><ellipse cx="70" cy="89" rx="5" ry="3"/><ellipse cx="81" cy="131" rx="5" ry="3"/><ellipse cx="92" cy="175" rx="5" ry="3"/><ellipse cx="104" cy="221" rx="6" ry="3"/><ellipse cx="116" cy="268" rx="6" ry="4"/><ellipse cx="129" cy="319" rx="6" ry="4"/><ellipse cx="144" cy="371" rx="6" ry="4"/><ellipse cx="159" cy="427" rx="7" ry="5"/><ellipse cx="174" cy="486" rx="7" ry="5"/><ellipse cx="190" cy="548" rx="8" ry="5"/><ellipse cx="207" cy="613" rx="8" ry="6"/><ellipse cx="226" cy="682" rx="9" ry="6"/>
      </g>
    </g>
    <!-- left motor and support -->
    <g transform="translate(400 820) scale(.33333)" stroke="#171717" stroke-width="5">
      <path d="M182 366 300 366 386 330 446 190 450 345 463 372V392L418 493 390 508H212L194 488 184 450Z" fill="#1b1b1b"/>
      <path d="M174 408 190 404 192 442 178 442Z" fill="#eeeeee"/>
      <path d="M172 343 190 345 196 366 176 358Z" fill="#9a9a9a"/>
      <path d="M208 370H346L370 466H240L215 455Z" fill="#222222" stroke="none"/>
      <path d="M432 240 442 345 418 470 424 360Z" fill="#080808" stroke="none"/>
      <path d="M450 345 412 455 418 492" fill="none" stroke="#0a0a0a"/>
      <path d="M188 344H282L284 368H196Z" fill="#bfbfbf"/>
      <path d="M368 352 394 336 398 350 372 368Z" fill="#bfbfbf"/>
      <path d="M194 455 210 468 214 503 198 490Z" fill="#9a9a9a"/>
      <path d="M210 468H386L391 506 213 503Z" fill="#bfbfbf"/>
      <path d="M386 468 412 456 416 492 391 506Z" fill="#8c8c8c"/>
      <path d="M325 183 445 186 387 320 320 370Z" fill="#84401a"/>
      <path d="M446 186V214L392 335 387 320Z" fill="#1b1b1b"/>
      <path d="M387 320V340L313 397V372Z" fill="#6e3412"/>
      <ellipse cx="342" cy="248" rx="25" ry="28" fill="#84848a"/>
      <path d="M350 222C370 226 372 250 360 262" fill="none" stroke="#ea7125" stroke-width="4"/>
      <ellipse cx="405" cy="206" rx="17" ry="9" fill="#55290f"/><ellipse cx="362" cy="299" rx="17" ry="10" fill="#55290f"/>
      <ellipse cx="330" cy="222" rx="17" ry="22" fill="#2a2a30"/>
      <ellipse cx="326" cy="196" rx="13" ry="18" fill="#5d5b70"/>
      <ellipse cx="324" cy="158" rx="17" ry="20" fill="#6e6c84"/>
      <path d="M300 92 336 352 313 388 272 143Z" fill="#111111"/>
      <ellipse cx="298" cy="198" rx="4" ry="11" fill="#84401a"/><ellipse cx="316" cy="310" rx="4" ry="12" fill="#84401a"/>
      <path d="M62 71 280 78 303 92 272 143H248L274 93 55 88Z" fill="#84401a"/>
      <path d="M55 88 274 93 248 142 278 342 101 340Z" fill="#ea7125"/>
      <path d="M248 142 272 143 313 396H290Z" fill="#ea7125"/>
      <ellipse cx="133" cy="246" rx="15" ry="12" fill="#84401a"/><ellipse cx="244" cy="247" rx="15" ry="12" fill="#84401a"/>
    </g>
    <!-- right motor and support -->
    <g transform="translate(1080 840) scale(.33333)" stroke="#171717" stroke-width="5">
      <path d="M84 165 112 300 163 350 190 348 312 350 314 376 300 400V436L294 470 276 484 110 480 84 465 66 365Z" fill="#1b1b1b"/>
      <path d="M303 396 321 402 318 428 308 440 300 430Z" fill="#eeeeee"/>
      <path d="M140 350 280 352 276 440 134 438Z" fill="#222222" stroke="none"/>
      <path d="M84 200 100 300 86 400 76 345Z" fill="#080808" stroke="none"/>
      <path d="M104 316 126 346 106 336Z" fill="#bfbfbf"/>
      <path d="M194 325H300L297 350 191 347Z" fill="#bfbfbf"/>
      <path d="M300 330 314 332 308 348 297 350Z" fill="#8c8c8c"/>
      <path d="M90 430 112 442 110 480 86 465Z" fill="#9a9a9a"/>
      <path d="M112 442 278 446 276 484 110 480Z" fill="#bfbfbf"/>
      <path d="M278 446 298 432 294 470 276 484Z" fill="#8c8c8c"/>
      <path d="M84 165 172 168 163 350 112 298Z" fill="#84401a"/>
      <path d="M112 298 163 350V375L112 316Z" fill="#6e3412"/>
      <path d="M164 204C140 210 138 240 156 250" fill="#3a3a40"/>
      <ellipse cx="116" cy="186" rx="17" ry="10" fill="#55290f"/><ellipse cx="135" cy="278" rx="17" ry="10" fill="#55290f"/>
      <path d="M180 80 194 130 164 374 154 300 164 180Z" fill="#111111"/>
      <path d="M180 78 200 66 408 69 413 86 208 80 217 130H192Z" fill="#84401a"/>
      <path d="M208 80 413 86 376 327 194 323 217 130Z" fill="#ea7125"/>
      <path d="M192 130H217L187 376H163Z" fill="#ea7125"/>
      <ellipse cx="238" cy="234" rx="14" ry="12" fill="#84401a"/><ellipse cx="342" cy="236" rx="14" ry="12" fill="#84401a"/>
    </g>
  </svg>
</main>

<script>
const link = name => ({ name, icon: 'part2', link: true, arrow: true });
const nodes = [
  { name: 'GINY Mk1 - 000 - CONJUNT GENERAL', icon: 'doc', arrow: true, large: true },
  { name: 'GINY Mk1 - 300 - MOTORITZACIO Z', icon: 'docGrey', arrow: true, large: true },
  { name: 'GINY Mk1 - 400 - PONT', icon: 'docGrey', arrow: true, large: true },
  { name: 'GINY Mk1 - 500 - CARRO', icon: 'docGrey', arrow: true, large: true },
  { name: 'GINY Mk1 - 600 - TAULA', icon: 'docGrey', arrow: true, large: true },
  { name: 'GINY Mk1 - 100 - ESTRUCTURA', icon: 'doc', arrow: true, large: true },
  { name: 'GINY Mk1 - 200 - MOTORITZACIO A-B', icon: 'doc', bold: true, children: [
    { name: 'Parts', icon: 'folder', arrow: true },
    { name: 'Model', icon: 'part', children: [
      { name: 'Origin', icon: 'origin', arrow: true },
      { name: 'LCS_Origin', icon: 'lcs' },
      { name: 'Constraints', icon: 'folder' },
      { name: 'Variables', icon: 'vars' },
      { name: 'LCS', icon: 'folderGrey', arrow: true },
      { name: 'SKETCHES', icon: 'folder', arrow: true },
      { ...link('GINY Mk1 - 201 - SUPORT MOTO'), large: true },
      { ...link('GINY Mk1 - 202 - SUPORT MOTO'), large: true },
      link('MGNR12_320001'), link('MGNR12_320002'),
      link('NEMA_17_40mm001'), link('NEMA_17_40mm002'),
      { ...link('GINY_Mk1___203___POLITGES_RET'), icon: 'body' },
      link('GINY_Mk1___204___POLITGES_RET'),
      link('toothed_Gear_v1001'), link('toothed_Gear_v1002'),
      link('toothed_Gear_v1003'), link('toothed_Gear_v1004'),
      link('GT2_20T_5MM001'), link('GT2_20T_5MM002')
    ] }
  ] }
];

const branch = (n, last) => `
  <svg class="h-8 w-6 shrink-0" viewBox="0 0 24 32" fill="none" aria-hidden="true">
    <path d="M9.500 0V${last ? 16 : 32}M10 16H24" stroke="#d8d8c8" stroke-opacity=".4" stroke-width="2"/>
    ${n.children ? '<path d="M3.500 13.500 9.500 18 15.500 13.500" stroke="#e2e2e0" stroke-width="3"/>' : ''}
    ${n.arrow ? '<path d="M6.500 9.500 11.500 16 6.500 22.500" stroke="#e2e2e0" stroke-width="3"/>' : ''}
  </svg>`;

const badge = '<path d="M-6 48H15V69H-6Z" fill="#fff"/><path d="M-3 66 8 55M-2 52H11V65" fill="none" stroke="#000" stroke-width="3.500"/>';

const textClass = n => n.bold ? 'whitespace-nowrap text-[18px] font-bold text-white'
  : n.large ? 'whitespace-nowrap text-[18px]'
  : 'whitespace-nowrap';

const row = (n, last) => `
  <li>
    <div class="flex h-8 items-center">
      ${n.children || n.arrow
        ? `<button class="shrink-0" aria-label="Toggle ${n.name}" aria-expanded="${!!n.children}">${branch(n, last)}</button>`
        : branch(n, last)}
      <svg class="ml-2 mr-[13px] size-[22px] shrink-0 overflow-visible" viewBox="0 0 66 66" aria-hidden="true">
        <use href="#${n.icon}" width="66" height="66"/>${n.link ? badge : ''}
      </svg>
      <span class="${textClass(n)}">${n.name}</span>
    </div>
    ${n.children ? `<ul class="pl-[30px]">${list(n.children)}</ul>` : ''}
  </li>`;

const list = items => items.map((n, i) => row(n, i === items.length - 1)).join('');
document.getElementById('tree').innerHTML = list(nodes);
</script>
</body>
</html>
